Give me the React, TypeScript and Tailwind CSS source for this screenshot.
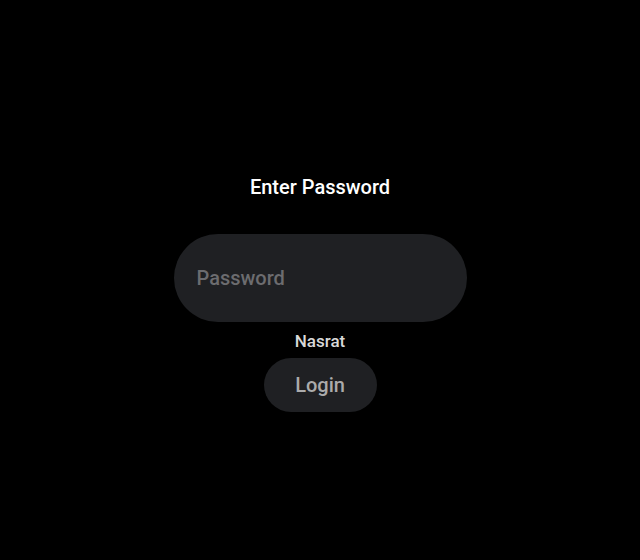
import React, { useState } from 'react';

const App: React.FC = () => {
  const [password, setPassword] = useState('');

  return (
    <div className="min-h-screen w-full bg-black flex flex-col items-center pt-[175px] font-['Roboto',sans-serif]">
      <h1 className="text-[20px] leading-[24px] font-medium text-white">Enter Password</h1>
      <input
        type="password"
        value={password}
        onChange={(e) => setPassword(e.target.value)}
        placeholder="Password"
        className="mt-[35px] w-[293px] h-[88px] rounded-full bg-[#1f2023] text-[#e0e0e0] text-[20px] font-medium px-[23px] outline-none placeholder-[#6c6c6f]"
      />
      <p className="mt-[8px] text-[17px] leading-[22px] font-medium text-[#d8d8d8]">Nasrat</p>
      <button className="mt-[6px] w-[113px] h-[54px] rounded-full bg-[#1f2023] text-[20px] font-medium text-[#ababab]">
        Login
      </button>
    </div>
  );
};

export default App;
